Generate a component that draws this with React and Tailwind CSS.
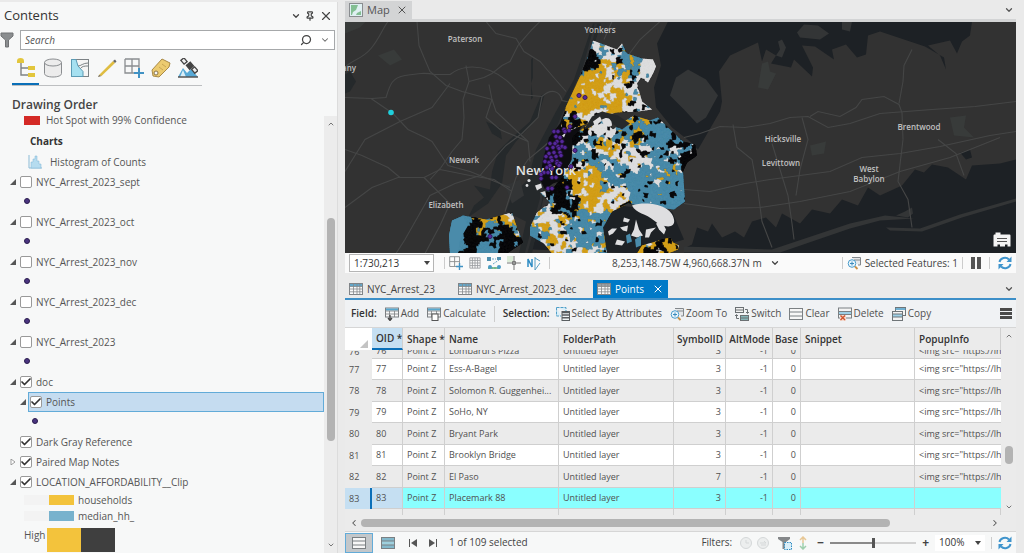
import { useState } from 'react';
import { ChevronDown, ChevronLeft, ChevronRight, ChevronUp, Pin, X, Search, Check } from 'lucide-react';

/* ---------- map data ---------- */

const roads = [
  'M345 68 C352 60 362 60 371 49 S382 30 388 22',
  'M345 98 L372 99 L386 98 C390 85 392 78 405 76 S425 73 435 75 L450 75 C460 67 475 65 490 71 S512 86 520 95 L542 97 C552 88 560 92 562 101 L576 104',
  'M371 99 L393 114 L408 130 L425 138 L432 142 L448 166 L470 172 L490 180 L510 188',
  'M466 66 L469 82 L463 100 L464 118 L462 140 L452 152 L441 168 L430 180',
  'M469 82 L484 78 L492 74 L502 66 L510 62 L518 46 L532 30 L540 22',
  'M417 22 L419 46 L424 58 L430 72 L446 86 L462 92 L492 100 L496 112 L528 142',
  'M486 22 L496 34 L516 39 L524 52 L540 62 L552 76 L566 92',
  'M542 97 L538 118 L522 134 L506 146 L495 158 L480 176 L455 184 L430 196 L405 240 L396 254',
  'M345 172 L365 140 L400 122 L432 108 L450 84',
  'M345 208 L372 188 L398 178 L424 178 L440 170 L470 176 L494 180 L512 192',
  'M345 150 L362 156 L388 168 L400 178',
  'M424 178 L450 204 L440 226 L425 254',
  'M576 104 L562 130 L545 146 L528 160 L516 178 L505 212',
  'M489 85 L492 100 L486 118 L500 130 L528 142 L530 162',
  'M660 22 L640 40 L625 60',
  'M612 22 L604 40',
  'M684 138 L700 134 L720 127 L745 128 L770 124 L790 118 L808 117 L828 128 L850 124 L880 114 L932 110 L975 107 L1016 102',
  'M810 117 L818 112 L840 117 L856 108 L862 100 L884 97 L899 105 L902 113 L903 140',
  'M899 104 L903 82 L904 66 L912 50',
  'M684 190 L710 192 L745 184 L770 180 L800 176 L830 172 L862 158 L900 154 L940 147 L990 136 L1016 132',
  'M684 204 L720 209 L760 208 L800 202 L850 192 L900 172 L950 158 L1000 138',
  'M733 125 L737 148 L752 160 L758 192 L762 222 L772 248',
  'M772 144 L780 170 L788 196 L792 224 L794 240',
  'M802 118 L808 140 L800 170 L796 196',
  'M903 140 L898 182 L908 200 L912 228',
  'M938 140 L956 154 L964 176',
];

const waters = [
  'M668 22 L657 44 L661 66 L654 88 L656 108 L672 128 L690 142 L698 150 L720 112 L722 102 L719 72 L730 56 L758 43 L762 62 L766 50 L776 56 L771 64 L791 68 L794 60 L812 77 L813 68 L802 46 L815 47 L834 60 L832 50 L846 45 L857 58 L866 55 L868 36 L880 32 L925 47 L944 58 L946 70 L940 56 L928 46 L950 41 L957 54 L962 42 L970 36 L972 22 Z',
  'M684 249 L692 245 L697 228 L708 232 L712 224 L722 238 L735 232 L744 238 L752 222 L766 218 L776 228 L782 214 L800 224 L812 210 L830 214 L842 200 L858 206 L868 188 L880 196 L902 186 L915 170 L924 173 L932 165 L948 168 L966 180 L972 166 L1000 164 L1016 160 L1016 254 L684 254 Z',
  'M532 250 L545 208 L610 205 L672 212 L684 240 L640 254 Z',
  'M960 153 L970 150 L972 158 L966 160 Z',
];

const rivers = [
  'M593 24 L601 24 L586 72 L566 116 L548 158 L544 196 L532 254 L519 254 L526 222 L506 212 L512 196 L528 180 L536 150 L556 112 L574 80 Z',
  'M498 152 L510 140 L530 122 L541 96 L545 94 L538 118 L516 142 L506 156 L502 184 L488 204 L468 218 L474 206 L484 198 L474 186 L490 190 L492 172 Z',
  'M345 75 L350 72 L356 82 L350 92 L345 94 Z',
  'M486 122 L500 128 L502 140 L492 134 Z',
  'M531 60 L533 58 L533 78 L531 84 L533 98 L531 100 Z',
];

const lands = [
  'M670 96 L676 78 L688 70 L706 80 L718 96 L706 118 L697 124 L684 110 Z',
  'M797 33 L804 25 L818 26 L829 34 L820 40 L800 38 Z',
  'M842 22 L852 22 L850 32 L842 30 Z',
  'M778 42 L782 40 L786 48 L782 58 L776 56 L780 50 Z',
  'M905 212 L912 208 L913 214 L908 218 L896 216 Z',
  'M684 247 L772 250 L850 224 L885 216 L914 219 L880 221 L850 229 L780 253 L684 253 Z',
  'M886 228 L920 229 L960 215 L1016 199 L1016 202 L962 218 L922 232 L890 231 Z',
  'M505 186 L520 180 L524 196 L512 204 Z',
];

const boroughs = [
  'M593 41 L617 50 L622 44 L627 54 L642 59 L653 60 L656 67 L653 74 L648 83 L641 78 L637 84 L642 102 L652 110 L638 112 L617 113 L604 116 L592 122 L582 126 L570 131 L560 132 L566 107 L580 77 L587 60 Z',
  'M573 137 L584 128 L597 118 L606 124 L613 130 L624 122 L634 116 L650 121 L658 118 L670 130 L683 142 L695 145 L697 156 L687 163 L683 172 L685 202 L674 210 L640 206 L628 204 L612 212 L603 228 L607 254 L552 254 L544 244 L530 236 L530 228 L537 213 L550 203 L540 193 L552 190 L562 178 L572 160 Z',
  'M452 221 L463 216 L486 220 L512 213 L517 228 L523 243 L507 254 L450 254 L449 236 Z',
  'M637 254 L642 246 L656 242 L662 240 L670 238 L673 243 L679 246 L678 250 L668 254 Z',
];

// x, y, then how strongly each colour shows: yellow, white, blue, black
const zones = [
  [603, 50, 0.1, 1.0, 0.3, 0.3],
  [588, 58, 0.1, 0.2, 0.6, 0.9],
  [596, 76, 1.1, 0.5, 0.1, 0.1],
  [612, 82, 0.8, 0.9, 0.2, 0.1],
  [626, 68, 0.4, 0.4, 0.8, 0.4],
  [648, 66, 0.0, 1.3, 0.0, 0.1],
  [580, 100, 1.2, 0.4, 0.1, 0.1],
  [612, 100, 1.0, 0.7, 0.1, 0.1],
  [636, 98, 0.1, 1.0, 0.4, 0.5],
  [574, 124, 0.6, 0.5, 0.1, 0.6],
  [600, 128, 0.1, 0.8, 0.3, 0.6],
  [586, 150, 0.3, 0.7, 0.8, 0.5],
  [604, 148, 0.8, 0.8, 0.4, 0.3],
  [634, 132, 0.6, 0.3, 0.7, 0.6],
  [632, 155, 0.4, 1.0, 0.3, 0.4],
  [660, 140, 0.1, 0.4, 1.0, 0.6],
  [678, 146, 0.0, 0.6, 0.8, 0.8],
  [692, 152, 0.0, 0.1, 0.2, 1.3],
  [662, 176, 0.5, 0.4, 1.0, 0.3],
  [640, 190, 0.1, 0.4, 1.2, 0.3],
  [674, 198, 0.1, 0.1, 1.1, 0.4],
  [610, 170, 0.3, 0.6, 0.9, 0.4],
  [588, 186, 1.0, 0.6, 0.3, 0.2],
  [556, 196, 0.1, 0.3, 0.6, 1.0],
  [598, 204, 1.0, 0.9, 0.1, 0.0],
  [616, 200, 0.8, 0.9, 0.2, 0.1],
  [544, 216, 0.7, 0.9, 0.5, 0.1],
  [556, 236, 1.0, 0.9, 0.2, 0.1],
  [584, 232, 0.3, 0.5, 0.9, 0.4],
  [604, 222, 0.4, 0.2, 0.9, 0.3],
  [535, 232, 0.1, 0.5, 1.0, 0.3],
  [580, 250, 0.4, 0.8, 0.6, 0.4],
  [456, 232, 0.0, 0.0, 1.6, 0.0],
  [474, 238, 0.0, 0.1, 0.2, 1.6],
  [486, 220, 0.7, 0.1, 0.4, 0.7],
  [494, 228, 0.0, 0.1, 0.8, 0.9],
  [510, 222, 0.8, 0.6, 0.6, 0.2],
  [508, 246, 0.0, 0.3, 0.5, 1.1],
  [484, 250, 0.0, 0.1, 1.2, 0.4],
  [660, 247, 0.9, 0.4, 0.1, 0.6],
];

const tones = ['#d3a01a', '#dddddf', '#4a8baa', '#0b0b0c'];

function rand(x, y, k) {
  const s = Math.sin(x * 127.1 + y * 311.7 + k * 74.7) * 43758.5453;
  return s - Math.floor(s);
}

// smooth value noise
function noise(x, y, k) {
  const ix = Math.floor(x);
  const iy = Math.floor(y);
  const fx = x - ix;
  const fy = y - iy;
  const top = rand(ix, iy, k) * (1 - fx) + rand(ix + 1, iy, k) * fx;
  const bottom = rand(ix, iy + 1, k) * (1 - fx) + rand(ix + 1, iy + 1, k) * fx;
  return top * (1 - fy) + bottom * fy;
}

function buildTracts() {
  const paths = ['', '', '', ''];
  const step = 2;
  const corner = (i, j) => {
    const x = 446 + (i + (rand(i, j, 8) - 0.5) * 0.8) * step;
    const y = 40 + (j + (rand(i, j, 9) - 0.5) * 0.8) * step;
    return `${x.toFixed(1)} ${y.toFixed(1)}`;
  };
  for (let i = 0; i < 127; i++) {
    for (let j = 0; j < 108; j++) {
      const x = 446 + i * step;
      const y = 40 + j * step;
      // wobble the lookup so that zone edges stay ragged
      const zx = x + (noise(x / 6, y / 6, 11) - 0.5) * 14;
      const zy = y + (noise(x / 6, y / 6, 12) - 0.5) * 14;
      let zone = zones[0];
      let best = Infinity;
      zones.forEach((z) => {
        const d = (z[0] - zx) ** 2 + (z[1] - zy) ** 2;
        if (d < best) {
          best = d;
          zone = z;
        }
      });
      let pick = 0;
      let high = -1;
      for (let k = 0; k < 4; k++) {
        const v = zone[k + 2] * 0.75 + noise(x / 3.8, y / 3.8, k + 1) * 1.3;
        if (v > high) {
          high = v;
          pick = k;
        }
      }
      paths[pick] += `M${corner(i, j)}L${corner(i + 1, j)}L${corner(i + 1, j + 1)}L${corner(i, j + 1)}Z`;
    }
  }
  return paths;
}

const tracts = buildTracts();

const points = [
  [579, 96], [585, 98], [575, 117], [570, 127], [569, 131], [564, 130], [554, 132], [558, 132], [556, 137], [560, 138],
  [565, 132], [557, 142], [562, 142], [550, 144], [553, 148], [558, 147], [562, 147], [565, 148], [547, 149], [549, 154],
  [554, 153], [560, 153], [546, 157], [551, 158], [556, 157], [561, 156], [545, 162], [549, 163], [547, 168], [552, 169],
  [557, 162], [557, 164], [560, 164], [550, 166], [544, 173], [541, 175], [541, 179], [552, 178], [556, 178], [548, 189],
  [552, 189], [567, 188], [571, 167], [575, 151], [559, 166], [490, 237], [555, 144], [559, 149], [552, 161], [548, 173],
];

const places = [
  [465, 42, 'Paterson'],
  [600, 33, 'Yonkers'],
  [464, 163, 'Newark'],
  [446, 208, 'Elizabeth'],
  [783, 142, 'Hicksville'],
  [781, 166, 'Levittown'],
  [919, 130, 'Brentwood'],
  [869, 172, 'West'],
  [869, 182, 'Babylon'],
  [349, 71, 'any'],
];

function CityMap() {
  return (
    <svg viewBox="345 22 671 232" preserveAspectRatio="xMidYMid slice" className="block h-full w-full bg-[#323232]" role="img" aria-label="Map of New York City">
      <defs>
        <clipPath id="city">
          {boroughs.map((d) => <path key={d} d={d} />)}
        </clipPath>
      </defs>
      <g fill="#1d2125">{waters.map((d) => <path key={d} d={d} />)}</g>
      <g fill="#25292b">{rivers.map((d) => <path key={d} d={d} />)}</g>
      <g fill="#333536">{lands.map((d) => <path key={d} d={d} />)}</g>
      <g fill="#383b3a">
        <path d="M762 64 L768 62 L770 72 L776 74 L768 90 L758 88 Z" />
        <path d="M950 118 L966 116 L964 128 L974 138 L954 136 Z" />
        <path d="M810 146 L826 142 L824 154 L812 156 Z" />
        <path d="M345 34 L360 28 L366 22 L345 22 Z" />
        <path d="M378 56 L394 50 L402 60 L390 66 Z" />
      </g>
      <g fill="none" stroke="#454646" strokeWidth="1.1">{roads.map((d) => <path key={d} d={d} />)}</g>
      <path d="M606 24 L592 52 M596 24 L584 68 L562 118 L544 160 L541 200 L526 254" fill="none" stroke="#2f3133" strokeWidth="2.500" />
      <path d="M587 60 L580 77 L567 106 L560 124 L549 138 L543 160 L540 180 L545 190 L553 184 L559 182 L570 166 L574 140 L588 116 Z" fill="#0d0d10" />
      <g clipPath="url(#city)">
        <rect x="445" y="38" width="256" height="217" fill="#131313" />
        {tracts.map((d, i) => <path key={tones[i]} d={d} fill={tones[i]} stroke={tones[i]} strokeWidth="0.4" />)}
        <path d="M620 206 L630 201 L634 210 L628 217 L620 214 Z" fill="#0b0b0c" />
        <path d="M449 222 L463 217 L468 226 L460 240 L458 254 L449 254 Z" fill="#4a8baa" />
      </g>
      <path d="M632 206 C648 201 672 206 674 220 C676 230 662 228 654 221 C646 214 636 214 632 206Z" fill="#dedee0" />
      <path d="M592 117 L602 112 L618 116 L630 124 L622 130 L612 124 L600 121 L590 128 L584 130 Z" fill="#26292b" />
      <g fill="#dedee0">
        <path d="M593 122 L600 117 L602 121 L595 127 Z" />
        <path d="M602 120 C608 116 612 120 612 126 C608 129 602 126 602 120Z" />
        <path d="M636 220 L639 230 L643 236 L637 238 L631 236 L634 230 Z" />
        <path d="M608 232 L612 229 L617 229 L613 234 L609 236 Z" />
        <path d="M620 228 L628 226 L627 232 L623 231 Z" />
        <path d="M646 230 L656 228 L651 233 L649 238 L645 238 Z" />
        <path d="M617 240 L625 242 L622 246 L615 245 Z" />
        <path d="M656 224 L662 222 L666 230 L664 235 L659 230 Z" />
        <path d="M624 218 L630 220 L628 223 L623 222 Z" />
        <path d="M535 186 L541 184 L542 188 L537 191 Z" />
        <circle cx="529" cy="181" r="1.6" />
        <circle cx="527" cy="186" r="1.4" />
        <path d="M562 136 L566 133 L564 138 Z" />
      </g>
      <g fill="#4a8baa">
        <path d="M635 240 L641 236 L641 246 L636 248 Z" />
        <path d="M626 236 L630 234 L632 242 L627 244 Z" />
      </g>
      <text x="546" y="175" textAnchor="middle" fontSize="13" fontWeight="600" fill="#e4e4e4">New York</text>
      <g fill="#55299c" stroke="#291247" strokeWidth="0.8">
        {points.map(([x, y]) => <circle key={`${x}-${y}`} cx={x} cy={y} r="2.1" />)}
      </g>
      <circle cx="391" cy="113" r="2.8" fill="#1fd0dc" />
      <g fontSize="8" fontWeight="600" fill="#c0c0c0" textAnchor="middle">
        {places.map(([x, y, name]) => <text key={name} x={x} y={y}>{name}</text>)}
      </g>
      <g transform="translate(993 232)">
        <path d="M1 3 h1.500 v-2 h5 v2 h9 q1 0 1 1 v11 h-3 v-2 h-2.500 v2 h-5 v-2 h-2.500 v2 h-4 v-11 Z" fill="#f4f4f4" />
        <path d="M4 7 h10 M4 10 h10" stroke="#555" strokeWidth="1" />
      </g>
    </svg>
  );
}

/* ---------- icons ---------- */

function TableIcon({ tint = '#9aa0a4' }) {
  return (
    <svg viewBox="0 0 14 12" className="h-3 w-3.5 shrink-0">
      <rect x="0.5" y="0.5" width="13" height="11" fill="#fafafa" stroke="#808488" />
      <rect x="1" y="1" width="12" height="2.500" fill={tint} />
      <path d="M1 3.500H13M1 6H13M1 8.800H13M4.500 1V11M8 1V11M10.800 1V11" stroke="#85898c" strokeWidth="0.8" />
    </svg>
  );
}

function FieldIcon({ children }) {
  return (
    <svg viewBox="0 0 14 14" className="size-3.5 shrink-0">
      <rect x="0.5" y="1" width="13" height="9" fill="#f6f6f6" stroke="#7b7f82" />
      <rect x="1" y="1.500" width="12" height="2" fill="#57a8cf" />
      <path d="M1 4H13M1 7H13M4.500 4V10M9.500 4V10" stroke="#7b7f82" strokeWidth="0.8" />
      {children}
    </svg>
  );
}

function SelectIcon() {
  return (
    <svg viewBox="0 0 14 14" className="size-3.5 shrink-0">
      <path d="M0.500 0.500H10V4M0.500 0.500V9H5" fill="#d9eef8" stroke="#4f9fc8" strokeDasharray="3 1" />
      <rect x="6" y="4.500" width="7.500" height="9" fill="#eef3f5" stroke="#595e61" />
      <path d="M6 5.500H13.500M6 8H13.500M6 10.800H13.500" stroke="#595e61" strokeWidth="1.4" />
    </svg>
  );
}

function ZoomToIcon() {
  return (
    <svg viewBox="0 0 14 14" className="size-3.5 shrink-0" fill="none">
      <path d="M5 1.500H13.500V9H11" fill="#e6e8ea" stroke="#83888c" />
      <path d="M7 4H13" stroke="#83888c" />
      <circle cx="5" cy="7.500" r="3.800" fill="#eaf5fb" stroke="#4a9ccb" />
      <path d="M3 7.500H7M5 5.500V9.500" stroke="#3a8bbd" />
      <path d="M8 10.500L10.500 13" stroke="#c98f46" strokeWidth="1.8" />
    </svg>
  );
}

function SwitchIcon() {
  return (
    <svg viewBox="0 0 14 14" className="size-3.5 shrink-0" fill="none" stroke="#6b7073">
      <rect x="0.5" y="0.5" width="8" height="5" fill="#f1f1f1" />
      <path d="M0.500 3H8.500" />
      <rect x="5.500" y="8.500" width="8" height="5" fill="#86b5b8" />
      <path d="M5.500 11H13.500M10 2.500H12.500V6M11 5L12.500 6.500L14 5M4 11.500H1.500V8M0 9L1.500 7.500L3 9" />
    </svg>
  );
}

function RowsIcon({ fill = '#f7f7f7', mid = '#f7f7f7' }) {
  return (
    <svg viewBox="0 0 14 12" className="h-3 w-3.5 shrink-0" stroke="#7b8083">
      <rect x="0.5" y="0.5" width="13" height="11" fill={fill} />
      <rect x="0.5" y="4" width="13" height="4" fill={mid} />
    </svg>
  );
}

function DeleteIcon() {
  return (
    <svg viewBox="0 0 14 14" className="size-3.5 shrink-0" stroke="#7b8083" fill="none">
      <rect x="0.5" y="1" width="13" height="10" fill="#f4f4f4" />
      <rect x="0.5" y="4.500" width="13" height="3" fill="#9ed0e6" />
      <rect x="2" y="8" width="6" height="6" fill="#f3dcd2" stroke="none" />
      <path d="M2.500 8.500L7 13M7 8.500L2.500 13" stroke="#d0532b" strokeWidth="1.4" />
    </svg>
  );
}

function CopyIcon() {
  return (
    <svg viewBox="0 0 14 14" className="size-3.5 shrink-0" stroke="#6f7578">
      <rect x="3.500" y="0.5" width="10" height="8" fill="#f4f4f4" />
      <path d="M3.500 2H13.500" stroke="#4f9fc8" strokeWidth="1.6" />
      <rect x="0.5" y="4.500" width="10" height="9" fill="#f4f4f4" />
      <rect x="0.5" y="7" width="10" height="3" fill="#9ed0e6" />
    </svg>
  );
}

function RefreshIcon() {
  return (
    <svg viewBox="0 0 14 14" className="size-3.5 shrink-0" fill="none" stroke="#3f94cc" strokeWidth="2">
      <path d="M1.500 6A5.500 5 0 0 1 11 3.500M12.500 8A5.500 5 0 0 1 3 10.500" />
      <path d="M13.500 0.500V6H8.500ZM0.500 13.500V8H5.500Z" fill="#3f94cc" stroke="none" />
    </svg>
  );
}

function GridPlusIcon() {
  return (
    <svg viewBox="0 0 20 20" className="h-full w-full" fill="none">
      <path d="M1 1H15V10M1 1V15H10M8 1V15M1 8H15" stroke="#8a8d90" strokeWidth="1.3" />
      <path d="M15 10V20M10 15H20" stroke="#4192c4" strokeWidth="2" />
    </svg>
  );
}

function Caret() {
  return (
    <svg viewBox="0 0 6 4" className="pointer-events-none absolute top-1/2 right-1 h-1 w-1.5 -translate-y-1/2">
      <path d="M0 0H6L3 4Z" fill="#444" />
    </svg>
  );
}

/* ---------- contents pane ---------- */

const listModes = [
  {
    name: 'List By Drawing Order',
    icon: (
      <>
        <path d="M5 5V17H12M5 10H12" fill="none" stroke="#7f8284" strokeWidth="1.400" />
        <path d="M1 5V3Q1 0 4.500 0Q8 0 8 3V5Z" fill="#e2c63c" />
        <rect x="12" y="8" width="7" height="4" fill="#e2c63c" />
        <rect x="12" y="15" width="7" height="4" fill="#e2c63c" />
      </>
    ),
  },
  {
    name: 'List By Data Source',
    icon: (
      <g fill="#ececec" stroke="#8a8d90">
        <path d="M1.500 4.500V15.500C1.500 17.500 5 19 10 19S18.500 17.500 18.500 15.500V4.500" />
        <ellipse cx="10" cy="4.500" rx="8.500" ry="3.500" />
      </g>
    ),
  },
  {
    name: 'List By Selection',
    icon: (
      <g stroke="#7c8285" fill="none">
        <rect x="1.500" y="1.500" width="17" height="17" fill="#f5f5f5" />
        <path d="M1.500 1.500H6L8 8L13 13.500V18.500H1.500Z" fill="#a5e0f0" stroke="#5a9bb5" />
        <path d="M8 8C11 8 13 5 18 5M10.500 10.500C12 8 15 8 18 8" />
      </g>
    ),
  },
  {
    name: 'List By Editing',
    icon: (
      <>
        <path d="M2 17L16 3L18 5L4.500 18Z" fill="#dfbd42" />
        <path d="M16 3L18 1.500L19.500 3.500L18 5Z" fill="#666" />
        <path d="M1 19L2 17L4.500 18Z" fill="#6b6045" />
      </>
    ),
  },
  { name: 'List By Snapping', icon: null },
  {
    name: 'List By Labeling',
    icon: (
      <>
        <path d="M1 12L11 1L19 5L18 9L8 19L2 18Z" fill="#eccb70" stroke="#a98a47" />
        <circle cx="5" cy="15" r="2" fill="#f7f7f7" stroke="#8a7447" />
        <path d="M11 6L15 9M8 9L12 12" stroke="#c9a550" />
      </>
    ),
  },
  {
    name: 'List By Perspective Imagery',
    icon: (
      <>
        <path d="M0 19L5 10L9 15L13 11L20 19Z" fill="#57a9d6" />
        <path d="M2 19L5 12L8 19Z" fill="#d9eef8" />
        <path d="M0 19H20" stroke="#555" strokeWidth="1.500" />
        <g fill="#f0f0f0" stroke="#444" strokeWidth="1.300">
          <rect x="4" y="0.5" width="4" height="5" transform="rotate(-40 6 3)" />
          <rect x="14.500" y="10" width="4" height="5" transform="rotate(-40 16 12)" />
          <rect x="9" y="5" width="5" height="5" fill="#444" transform="rotate(-40 12 7)" />
        </g>
      </>
    ),
  },
];

function Twisty({ open = true }) {
  return (
    <svg viewBox="0 0 6 6" className="size-1.5 shrink-0">
      {open ? <path d="M6 0V6H0Z" fill="#555" /> : <path d="M1 0L5 3L1 6Z" fill="#fff" stroke="#888" strokeWidth="0.8" />}
    </svg>
  );
}

function LayerCheck({ label, checked }) {
  const [on, setOn] = useState(checked);
  return (
    <label className="flex items-center gap-1">
      <span className="relative flex size-3">
        <input
          type="checkbox"
          checked={on}
          onChange={() => setOn(!on)}
          className="peer size-3 appearance-none rounded-xs border border-[#999] bg-white"
        />
        <Check className="pointer-events-none absolute inset-0 hidden size-3 text-[#333] peer-checked:block" strokeWidth={3.5} />
      </span>
      <span>{label}</span>
    </label>
  );
}

function Layer({ label, checked = false, open = true, leaf = false }) {
  return (
    <li className="flex h-5 items-center gap-1 pl-2.5">
      {leaf ? <span className="size-1.5" /> : <Twisty open={open} />}
      <LayerCheck label={label} checked={checked} />
    </li>
  );
}

function Dot({ nested = false }) {
  return (
    <li className={nested ? 'flex h-5 items-center pb-0.5 pl-8' : 'flex h-5 items-center pb-0.5 pl-6'}>
      <span className="size-1.5 rounded-full border border-[#2a1c4d] bg-[#4a3580]" />
    </li>
  );
}

function Contents() {
  const arrests = ['NYC_Arrest_2023_sept', 'NYC_Arrest_2023_oct', 'NYC_Arrest_2023_nov', 'NYC_Arrest_2023_dec', 'NYC_Arrest_2023'];
  return (
    <aside className="mt-0.5 flex w-1/3 max-w-[338px] shrink-0 grow flex-col border-r border-[#dcdcdc] bg-[#f7f8f8]">
      <header className="flex h-7 items-center justify-between px-1">
        <h1 className="text-[13px] text-[#333]">Contents</h1>
        <div className="flex items-center gap-1 text-[#444]">
          <button aria-label="Options"><ChevronDown className="size-2.5" strokeWidth={3} /></button>
          <button aria-label="Auto hide"><Pin className="size-2.5" strokeWidth={3} /></button>
          <button aria-label="Close"><X className="size-3.5" /></button>
        </div>
      </header>

      <div className="flex items-center gap-1.5 pr-0.5">
        <svg viewBox="0 0 14 16" className="h-4 w-3.5 shrink-0">
          <path d="M1 1H13V4L8.500 8V15H5.500V8L1 4Z" fill="#8b8e90" stroke="#707274" />
        </svg>
        <div className="flex h-5 flex-1 items-center gap-2 border border-[#a6a8aa] bg-white px-1">
          <input type="text" aria-label="Search layers" placeholder="Search" className="min-w-0 flex-1 text-[10px] italic outline-none placeholder:text-[#555]" />
          <button aria-label="Search"><Search className="size-3 -scale-x-100 text-[#444]" strokeWidth={2.5} /></button>
          <button aria-label="Search options"><ChevronDown className="size-2.5 text-[#666]" strokeWidth={2.5} /></button>
        </div>
      </div>

      <nav className="ml-3 flex w-[190px] border-b border-[#bdbfc1]">
        {listModes.map((mode, i) => (
          <button
            key={mode.name}
            aria-label={mode.name}
            className={i === 0 ? 'flex h-[35px] w-7 items-center justify-center border-b-2 border-[#0a6fb8] pt-0.5' : 'flex h-[35px] w-7 items-center justify-center'}
          >
            <span className="size-5">
              {mode.icon ? <svg viewBox="0 0 20 20" className="size-5">{mode.icon}</svg> : <GridPlusIcon />}
            </span>
          </button>
        ))}
      </nav>

      <h2 className="flex h-[30px] items-end pb-0.5 pl-3 text-[12px] font-semibold text-[#444]">Drawing Order</h2>

      <div className="flex min-h-0 flex-1">
        <ul className="min-w-0 flex-1 overflow-hidden text-[10px] whitespace-nowrap text-[#555]">
          <li className="-mt-1.5 flex h-5 items-center gap-1.5 pl-6">
            <span className="h-2.5 w-4 bg-[#d42a26]" />
            Hot Spot with 99% Confidence
          </li>
          <li className="flex h-[22px] items-center pl-7.5 font-bold text-[#333]">Charts</li>
          <li className="flex h-5 items-center gap-2 pl-7">
            <svg viewBox="0 0 14 14" className="size-3.5">
              <path d="M1 0V13H14" fill="none" stroke="#8bbbd6" />
              <path d="M3 13V7H5V4H7V1H9V6H11V9H13V13Z" fill="#b6dcef" stroke="#7db7d6" strokeWidth="0.500" />
            </svg>
            Histogram of Counts
          </li>
          {arrests.map((name) => [<Layer key={name} label={name} />, <Dot key={`${name}-dot`} />])}
          <Layer label="doc" checked />
          <li className="flex h-5 items-center gap-0.5 pl-5">
            <Twisty />
            <div className="flex h-5 flex-1 items-center border border-[#62abd8] bg-[#c5dcf0] px-px">
              <LayerCheck label="Points" checked />
            </div>
          </li>
          <Dot nested />
          <Layer label="Dark Gray Reference" checked leaf />
          <Layer label="Paired Map Notes" checked open={false} />
          <Layer label="LOCATION_AFFORDABILITY__Clip" checked />
          <li className="flex h-4 items-center gap-1 pl-6">
            <span className="h-2.5 w-[50px] border-l-[25px] border-[#f3f3f3] bg-[#f3c33c]" />
            households
          </li>
          <li className="flex h-4 items-center gap-1 pl-6">
            <span className="h-2.5 w-[50px] border-l-[25px] border-[#f3f3f3] bg-[#78b2cd]" />
            median_hh_
          </li>
          <li className="mt-1 flex items-start gap-0.5 pl-6">
            High
            <span className="h-6 w-[68px] border-r-[34px] border-[#3f3f3f] bg-[#f3c33c]" />
          </li>
        </ul>
        <div className="flex w-[13px] flex-col items-center bg-[#ececec] text-[#777]">
          <ChevronUp className="my-1 size-2" strokeWidth={3} />
          <span className="flex-[86]" />
          <span className="w-2 flex-[223] rounded-full bg-[#b3b3b3]" />
          <span className="flex-[96]" />
          <ChevronDown className="my-1 size-2" strokeWidth={3} />
        </div>
      </div>
    </aside>
  );
}

/* ---------- map view ---------- */

function MapStatus() {
  return (
    <div className="flex h-5 items-center gap-2 bg-[#fafafa] px-1 text-[10px] text-[#444]">
      <span className="relative mr-0.5">
        <select aria-label="Map scale" className="block h-[18px] w-[85px] appearance-none border border-[#b5b5b5] bg-white pl-1 text-[10px] text-[#333]">
          <option>1:730,213</option>
        </select>
        <Caret />
      </span>
      <span className="h-3 w-px bg-[#ccc]" />
      <div className="-ml-1 flex items-center gap-1.5">
        <button aria-label="Grid" className="size-3.5"><GridPlusIcon /></button>
        <button aria-label="Snapping grid">
          <svg viewBox="0 0 14 14" className="size-3"><path d="M1 1H13V13H1ZM1 4H13M1 7H13M1 10H13M4 1V13M7 1V13M10 1V13" fill="none" stroke="#9a9da0" /></svg>
        </button>
        <button aria-label="Snapping">
          <svg viewBox="0 0 14 14" className="size-3.5" fill="none">
            <path d="M2 3H9M6 8L12 4M1 12H13" stroke="#66a6c4" strokeDasharray="2 1" />
            <path d="M0 1H4V5H0ZM10 1H14V4H10Z" fill="#4f8fae" />
            <path d="M1 12H13" stroke="#5fae76" strokeWidth="1.500" />
            <circle cx="3" cy="11" r="2" fill="#4c9bc6" />
            <circle cx="12" cy="11" r="2" fill="#4c9bc6" />
          </svg>
        </button>
        <button aria-label="Dynamic constraints">
          <svg viewBox="0 0 14 14" className="size-3.5">
            <rect x="0" y="0" width="6" height="6" fill="#dcecd8" />
            <path d="M0 7H14M7 0V14" stroke="#777" />
            <path d="M5.500 5.500H8.500V8.500H5.500Z" fill="none" stroke="#777" />
          </svg>
        </button>
        <button aria-label="Correct to ground">
          <svg viewBox="0 0 14 14" className="size-3.5" fill="none">
            <path d="M1 11V3L5 11V3" stroke="#2f8cc4" strokeWidth="1.500" />
            <path d="M8 1V14L13 7M8 2L13 5" stroke="#5a9fc4" />
          </svg>
        </button>
      </div>
      <span className="h-3 w-px bg-[#ccc]" />
      <div className="flex flex-1 items-center justify-center gap-2">
        <span>8,253,148.75W 4,960,668.37N m</span>
        <button aria-label="Coordinate format"><ChevronDown className="size-2.5" strokeWidth={3} /></button>
      </div>
      <span className="h-3 w-px bg-[#ccc]" />
      <button className="-mx-1 flex items-center gap-1"><ZoomToIcon />Selected Features: 1</button>
      <span className="h-3 w-px bg-[#ccc]" />
      <button aria-label="Pause drawing" className="flex gap-0.5">
        <span className="h-3 w-1 bg-[#555]" />
        <span className="h-3 w-1 bg-[#555]" />
      </button>
      <span className="h-3 w-px bg-[#ccc]" />
      <button aria-label="Refresh"><RefreshIcon /></button>
    </div>
  );
}

function MapView() {
  return (
    <section className="flex min-h-0 flex-1 flex-col">
      <div className="flex h-[22px] shrink-0 items-center justify-between border-b-3 border-[#d3d4d5] pt-px">
        <div className="flex h-full items-center gap-1 bg-[#d3d4d5] px-1 text-[11px] text-[#555]">
          <svg viewBox="0 0 14 14" className="size-3.5">
            <rect x="0.5" y="0.5" width="13" height="13" fill="#dff0f2" stroke="#8a8d90" />
            <path d="M2 2H9L7 7L4 9L3 12H2ZM8 10L12 8V12H7Z" fill="#83bf93" />
          </svg>
          Map
          <button aria-label="Close map" className="ml-0.5"><X className="size-3" /></button>
        </div>
        <button aria-label="Open views" className="pr-0.5"><ChevronDown className="size-2.5 text-[#555]" strokeWidth={3} /></button>
      </div>
      <div className="min-h-0 flex-1"><CityMap /></div>
      <MapStatus />
    </section>
  );
}

/* ---------- attribute table ---------- */

const columns = [
  { name: 'OID *', width: 'w-[31px]' },
  { name: 'Shape *', width: 'w-[42px]' },
  { name: 'Name', width: 'w-[114px]' },
  { name: 'FolderPath', width: 'w-[115px]' },
  { name: 'SymbolID', width: 'w-[52px]', right: true },
  { name: 'AltMode', width: 'w-[47px]', right: true },
  { name: 'Base', width: 'w-[28px]', right: true },
  { name: 'Snippet', width: 'w-[114px]' },
  { name: 'PopupInfo', width: '' },
];

const img = '<img src="https://lh3';

const rows = [
  [76, "Lombardi's Pizza", 3, img],
  [77, 'Ess-A-Bagel', 3, img],
  [78, 'Solomon R. Guggenhei...', 3, img],
  [79, 'SoHo, NY', 3, img],
  [80, 'Bryant Park', 3, img],
  [81, 'Brooklyn Bridge', 3, img],
  [82, 'El Paso', 7, img],
  [83, 'Placemark 88', 3, ''],
];

function rowStyle(oid) {
  if (oid === 76) return { tr: 'bg-[#ebebeb]', cell: 'flex h-2 items-end overflow-hidden' };
  if (oid === 83) return { tr: 'h-[21px] bg-[#8affff]', cell: '' };
  return oid % 2 ? { tr: 'h-[21px] bg-white', cell: '' } : { tr: 'h-[22px] bg-[#ebebeb]', cell: '' };
}

function Cell({ children, wrap, right, className = '' }) {
  return (
    <td className={`border-r border-b border-[#cfcfcf] p-0 ${className}`}>
      <div className={`${wrap} whitespace-nowrap ${right ? 'justify-end pr-1 text-right' : 'pl-1'}`}>{children}</div>
    </td>
  );
}

function Records() {
  return (
    <table className="w-full table-fixed border-separate border-spacing-0 text-[9px] leading-[14px] text-[#505050]">
      <thead>
        <tr className="h-[22px] bg-[#ebebeb] text-left text-[10px] text-[#333]">
          <th className="w-[27px] bg-white p-0 align-bottom">
            <svg viewBox="0 0 8 8" className="mr-1 mb-0.5 ml-auto size-2"><path d="M8 0V8H0Z" fill="#c4c4c4" /></svg>
          </th>
          {columns.map((c, i) => (
            <th
              key={c.name}
              className={`${c.width} border-r border-[#cfcfcf] p-0 font-semibold whitespace-nowrap ${i === 0 ? 'border-b-2 border-b-[#0a6fb8] bg-[#c5dff2]' : ''} ${c.right ? 'pr-0.5 text-right' : 'pl-1'}`}
            >
              {c.name}
            </th>
          ))}
        </tr>
      </thead>
      <tbody>
        {rows.map(([oid, name, symbol, popup]) => {
          const style = rowStyle(oid);
          const selected = oid === 83;
          return (
            <tr key={oid} className={style.tr}>
              <td className={selected ? 'border-r-2 border-[#0a6fb8] bg-[#c5dff2] p-0' : 'bg-[#ebebeb] p-0'}>
                <div className={`${style.cell} px-1`}>{oid}</div>
              </td>
              <Cell wrap={style.cell} className={selected ? 'bg-[#c5dff2]' : ''}>{oid}</Cell>
              <Cell wrap={style.cell}>Point Z</Cell>
              <Cell wrap={style.cell}>{name}</Cell>
              <Cell wrap={style.cell}>Untitled layer</Cell>
              <Cell wrap={style.cell} right>{symbol}</Cell>
              <Cell wrap={style.cell} right>-1</Cell>
              <Cell wrap={style.cell} right>0</Cell>
              <Cell wrap={style.cell} />
              <td className="overflow-hidden border-b border-[#cfcfcf] p-0 whitespace-nowrap">
                <div className={`${style.cell} pl-1`}>{popup}</div>
              </td>
            </tr>
          );
        })}
        <tr className="h-[6px] bg-[#ebebeb]">
          <td className="p-0" />
          {columns.map((c) => <td key={c.name} className="border-r border-[#cfcfcf] p-0" />)}
        </tr>
      </tbody>
    </table>
  );
}

function Tool({ icon, children }) {
  return <button className="flex items-center gap-0.5">{icon}{children}</button>;
}

function AttributeTable() {
  const [zoom, setZoom] = useState(50);
  return (
    <section className="shrink-0">
      <div className="flex h-5 items-center border-b-2 border-[#3d8fc8] text-[10px] text-[#444]">
        <button className="flex w-[109px] items-center gap-1 pl-1"><TableIcon tint="#63a6c8" />NYC_Arrest_23</button>
        <button className="flex w-[139px] items-center gap-1 pl-1"><TableIcon tint="#63a6c8" />NYC_Arrest_2023_dec</button>
        <div className="flex h-full items-center gap-1 bg-[#007ac8] px-1 text-white">
          <TableIcon />
          Points
          <button aria-label="Close Points" className="ml-1"><X className="size-3" /></button>
        </div>
        <button aria-label="Open tables" className="ml-auto pr-0.5"><ChevronDown className="size-2.5 text-[#555]" strokeWidth={3} /></button>
      </div>

      <div className="flex h-[27px] items-center gap-2 bg-[#f0f2f4] pr-2 pl-1.5 text-[10px] whitespace-nowrap text-[#505050]">
        <span className="font-semibold text-[#333]">Field:</span>
        <Tool icon={<FieldIcon><path d="M5 8V13M3 11L5 13.500L7 11" fill="none" stroke="#444" strokeWidth="1.300" /></FieldIcon>}>Add</Tool>
        <Tool icon={<FieldIcon><rect x="5" y="7" width="6" height="6.500" fill="#fff" stroke="#555" /></FieldIcon>}>Calculate</Tool>
        <span className="h-4 w-px bg-[#ccc]" />
        <span className="-mr-0.5 font-semibold text-[#333]">Selection:</span>
        <Tool icon={<SelectIcon />}>Select By Attributes</Tool>
        <Tool icon={<ZoomToIcon />}>Zoom To</Tool>
        <Tool icon={<SwitchIcon />}>Switch</Tool>
        <Tool icon={<RowsIcon />}>Clear</Tool>
        <Tool icon={<DeleteIcon />}>Delete</Tool>
        <Tool icon={<CopyIcon />}>Copy</Tool>
        <button aria-label="Menu" className="-mr-1 ml-auto flex flex-col gap-px">
          <span className="h-[3px] w-3 bg-[#4a4a4a]" />
          <span className="h-[3px] w-3 bg-[#4a4a4a]" />
          <span className="h-[3px] w-3 bg-[#4a4a4a]" />
        </button>
      </div>

      <div className="flex border-t border-[#d6d6d6] bg-[#ebebeb]">
        <div className="min-w-0 flex-1"><Records /></div>
        <div className="flex w-[15px] flex-col items-center text-[#777]">
          <ChevronUp className="my-1 size-2" strokeWidth={3} />
          <span className="flex-[100]" />
          <span className="w-2 flex-[18] rounded-full bg-[#b3b3b3]" />
          <span className="flex-[34]" />
          <ChevronDown className="my-1 size-2" strokeWidth={3} />
        </div>
      </div>
      <div className="flex h-4 items-center bg-[#ebebeb] pr-4 pl-1 text-[#555]">
        <ChevronLeft className="mr-0.5 size-2.5" strokeWidth={2.5} />
        <span className="h-2 flex-[528] rounded-full bg-[#b3b3b3]" />
        <span className="flex-[100]" />
        <ChevronRight className="size-2.5" strokeWidth={2.5} />
      </div>

      <footer className="flex h-[22px] items-center border-t border-[#d6d6d6] bg-[#f7f8f8] pr-1 text-[10px] text-[#444]">
        <button aria-label="Show all records" className="flex h-5 w-7 items-center justify-center border border-[#62abd8] bg-[#c3c7ca]"><RowsIcon /></button>
        <button aria-label="Show selected records" className="ml-2"><RowsIcon fill="#83b9cc" mid="#9ed0de" /></button>
        <button aria-label="First record" className="ml-3.5">
          <svg viewBox="0 0 8 8" className="size-2"><path d="M0 0H1V8H0ZM8 0V8L2 4Z" fill="#555" /></svg>
        </button>
        <button aria-label="Last record" className="ml-3">
          <svg viewBox="0 0 8 8" className="size-2"><path d="M7 0H8V8H7ZM0 0V8L6 4Z" fill="#555" /></svg>
        </button>
        <span className="ml-3">1 of 109 selected</span>
        <div className="ml-auto flex items-center gap-1.5">
          <span>Filters:</span>
          <svg viewBox="0 0 34 14" className="h-3.5 w-[34px]" fill="#eceeee" stroke="#d5d8d9">
            <circle cx="8" cy="7" r="5.500" />
            <path d="M8 4V7H11" />
            <circle cx="25" cy="7" r="5.500" />
            <path d="M22 7H28L26 5M28 9H23" />
          </svg>
          <button aria-label="Filter by extent">
            <svg viewBox="0 0 15 14" className="h-3.5 w-[15px]">
              <path d="M0 1H12V3L8 6V13H4.500V6L0 3Z" fill="#85888a" />
              <rect x="6.500" y="6.500" width="7" height="7" fill="#d9eef8" stroke="#2f8cc4" strokeDasharray="1.500 1" />
            </svg>
          </button>
          <button aria-label="Sort">
            <svg viewBox="0 0 8 14" className="h-3.5 w-2" fill="none" strokeWidth="1.500">
              <path d="M4 1V7M1 4L4 1L7 4" stroke="#e8c896" />
              <path d="M4 7V13M1 10L4 13L7 10" stroke="#9fcfae" />
            </svg>
          </button>
        </div>
        <div className="ml-2.5 flex items-center gap-1.5">
          <button aria-label="Zoom out" className="text-xs font-bold">−</button>
          <span className="relative flex h-3 w-[86px] items-center">
            <span className="h-0.5 w-1/2 bg-[#8a8a8a]" />
            <span className="h-0.5 w-1/2 bg-[#d2d2d2]" />
            <input
              type="range"
              aria-label="Table zoom"
              value={zoom}
              onChange={(e) => setZoom(Number(e.target.value))}
              className="absolute inset-0 w-full appearance-none bg-transparent [&::-webkit-slider-thumb]:h-2.5 [&::-webkit-slider-thumb]:w-[3px] [&::-webkit-slider-thumb]:appearance-none [&::-webkit-slider-thumb]:bg-[#555]"
            />
          </span>
          <button aria-label="Zoom in" className="text-xs font-bold">+</button>
        </div>
        <span className="relative ml-1.5">
          <select aria-label="Zoom level" className="block h-4 w-[50px] appearance-none bg-white pl-1 text-[10px] text-[#333]">
            <option>100%</option>
          </select>
          <Caret />
        </span>
        <span className="mx-1.5 h-3 w-px bg-[#ccc]" />
        <button aria-label="Reload table"><RefreshIcon /></button>
      </footer>
    </section>
  );
}

export default function App() {
  return (
    <div className="flex h-screen overflow-hidden bg-[#eaeaea] font-['Open_Sans','Noto_Sans',sans-serif]">
      <Contents />
      <main className="ml-[7px] flex min-w-0 flex-[2] flex-col gap-[7px] pr-2">
        <MapView />
        <AttributeTable />
      </main>
    </div>
  );
}
